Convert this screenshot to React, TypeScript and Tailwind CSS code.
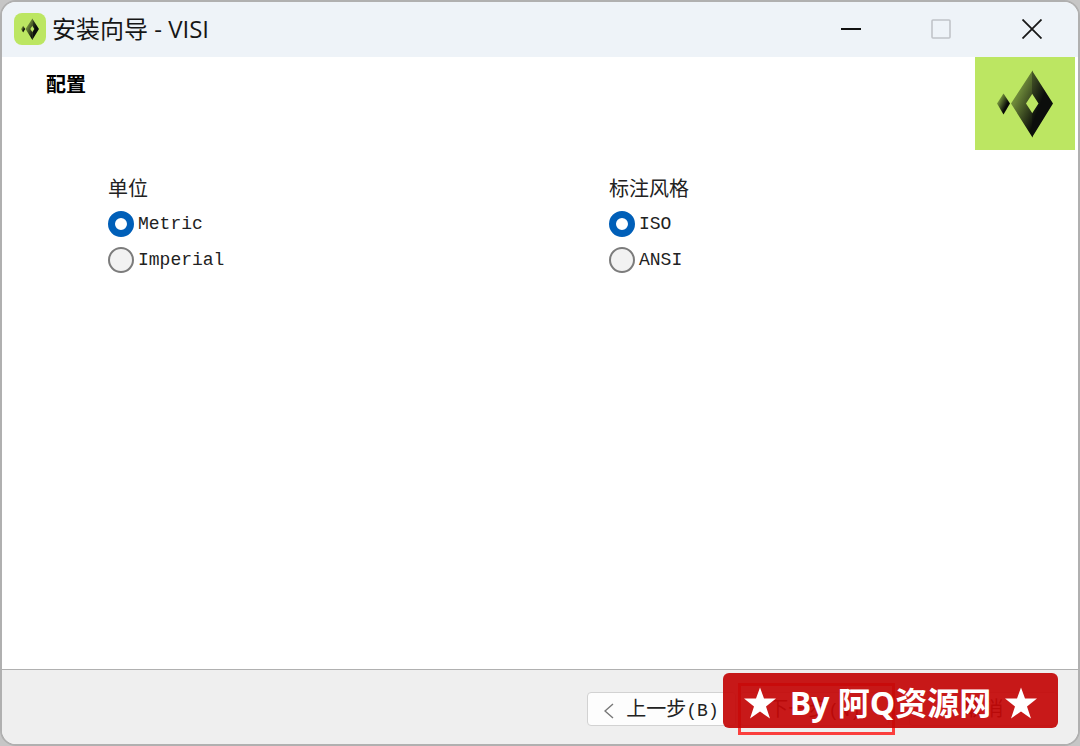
import type { ReactNode } from 'react'

interface LogoProps { className?: string; id: string }

function Logo({ className, id }: LogoProps) {
  return (
    <svg viewBox="0 0 100 92" className={className} aria-hidden="true">
      <defs>
        <linearGradient id={`${id}-left`} x1="0.3" y1="0" x2="0.9" y2="0.9">
          <stop offset="0" stopColor="#84a544" />
          <stop offset="0.3" stopColor="#6b8638" />
          <stop offset="1" stopColor="#0c0f0a" />
        </linearGradient>
        <linearGradient id={`${id}-right`} x1="0" y1="0" x2="0.4" y2="0.5">
          <stop offset="0" stopColor="#4a5b2a" />
          <stop offset="1" stopColor="#0c0e0c" />
        </linearGradient>
        <linearGradient id={`${id}-small`} x1="0.2" y1="0.2" x2="0.7" y2="0.6">
          <stop offset="0" stopColor="#7c9b3f" />
          <stop offset="1" stopColor="#090c08" />
        </linearGradient>
      </defs>
      <path d="M22 46 28.500 36 35 46 28.500 57Z" fill={`url(#${id}-small)`} />
      <path d="M57.500 13V36L51 46 57.500 56V80L36 46Z" fill={`url(#${id}-left)`} />
      <path d="M57 13 78 46 57 80V56L63.500 46 57 36Z" fill={`url(#${id}-right)`} />
    </svg>
  )
}

function Star() {
  return (
    <svg viewBox="0 0 32 31" className="h-8 w-8 shrink-0" fill="#fff" aria-hidden="true">
      <path d="M16 0 20 11H32L22 19 26 31 16 24 6 31 10 19 0 11H12Z" />
    </svg>
  )
}

interface OptionGroupProps { title: string; name: string; options: string[] }

function OptionGroup({ title, name, options }: OptionGroupProps) {
  return (
    <fieldset>
      <legend className="text-xl leading-6">{title}</legend>
      <div className="flex flex-col gap-2.5 pt-2">
        {options.map((option, i) => (
          <label key={option} className="flex items-center gap-1 text-lg leading-6">
            <input
              type="radio"
              name={name}
              defaultChecked={i === 0}
              className="h-[26px] w-[26px] shrink-0 appearance-none rounded-full border-2 border-[#7c7c7c] bg-[#f2f2f2] checked:border-[7px] checked:border-[#005fb8] checked:bg-white"
            />
            {option}
          </label>
        ))}
      </div>
    </fieldset>
  )
}

function NavButton({ children }: { children: ReactNode }) {
  return (
    <button
      type="button"
      className="flex h-[34px] w-[149px] items-center justify-center rounded border border-[#d2d2d2] bg-[#fdfdfd] pt-1 text-xl"
    >
      {children}
    </button>
  )
}

export default function App() {
  return (
    <div className="flex min-h-screen flex-col bg-[#c6c6c6] font-['Liberation_Mono','Noto_Sans_CJK_SC',monospace] text-[#222]">
      <div className="flex flex-1 flex-col overflow-hidden rounded-2xl border-2 border-[#b0b0b0] bg-white">
        <header className="flex h-[55px] shrink-0 items-center justify-between bg-[#eef3f8] pb-0.5 pl-3">
          <div className="flex items-center gap-1.5">
            <div className="flex h-8 w-8 items-center justify-center rounded-lg bg-[#bce662]">
              <Logo id="title" className="h-8 w-8" />
            </div>
            <h1 className="font-['Open_Sans','Noto_Sans_CJK_SC',sans-serif] text-2xl leading-8 text-[#161616]">
              安装向导 - VISI
            </h1>
          </div>
          <div className="flex h-full">
            <button type="button" aria-label="最小化" className="flex w-[90px] items-center justify-center">
              <svg viewBox="0 0 20 20" className="h-5 w-5" stroke="#111" strokeWidth="2">
                <path d="M0 10H20" />
              </svg>
            </button>
            <button type="button" aria-label="最大化" disabled className="flex w-[90px] items-center justify-center">
              <svg viewBox="0 0 20 20" className="h-5 w-5" fill="none" stroke="#c0c3c8" strokeWidth="1.6">
                <rect x="1" y="1" width="18" height="18" rx="1" />
              </svg>
            </button>
            <button type="button" aria-label="关闭" className="flex w-[92px] items-center justify-center">
              <svg viewBox="0 0 20 20" className="h-5 w-5" stroke="#181818" strokeWidth="1.8">
                <path d="M.5.5 19.5 19.5M19.5.5.5 19.5" />
              </svg>
            </button>
          </div>
        </header>

        <main className="flex-1">
          <div className="flex justify-between pl-11 pr-[3px]">
            <h2 className="pt-4 text-xl font-bold leading-7 text-black">配置</h2>
            <div className="h-[93px] w-[100px] bg-[#bce662]">
              <Logo id="banner" className="h-full w-full" />
            </div>
          </div>
          <div className="grid grid-cols-2 gap-8 pl-[106px] pt-[29px]">
            <OptionGroup title="单位" name="unit" options={['Metric', 'Imperial']} />
            <OptionGroup title="标注风格" name="style" options={['ISO', 'ANSI']} />
          </div>
        </main>

        <footer className="relative flex h-[75px] shrink-0 justify-end border-t border-[#b0b0b0] bg-[#efefef] pr-5 pt-[22px]">
          <div className="flex gap-5">
            <div className="flex gap-1">
              <NavButton>
                <svg viewBox="0 0 10 16" className="mr-3 h-4 w-2.5" fill="none" stroke="#777" strokeWidth="1.4">
                  <path d="M9 1 1 8 9 15" />
                </svg>
                上一步<span className="text-lg">(B)</span>
              </NavButton>
              <NavButton>
                下一步<span className="text-lg">(N)</span>
              </NavButton>
            </div>
            <NavButton>取消</NavButton>
          </div>
          <div className="absolute bottom-[9px] right-[183px] h-[52px] w-[157px] border-[3px] border-[#fb3f3d]" />
          <div className="absolute bottom-4 right-5 flex h-[55px] w-[335px] items-center justify-center gap-3.5 rounded-md bg-[#c40808]/93 pt-1 font-['Open_Sans','Noto_Sans_CJK_SC',sans-serif] text-[32px] font-bold leading-10 text-white">
            <Star />
            <span className="whitespace-nowrap">By 阿Q资源网</span>
            <Star />
          </div>
        </footer>
      </div>
    </div>
  )
}
